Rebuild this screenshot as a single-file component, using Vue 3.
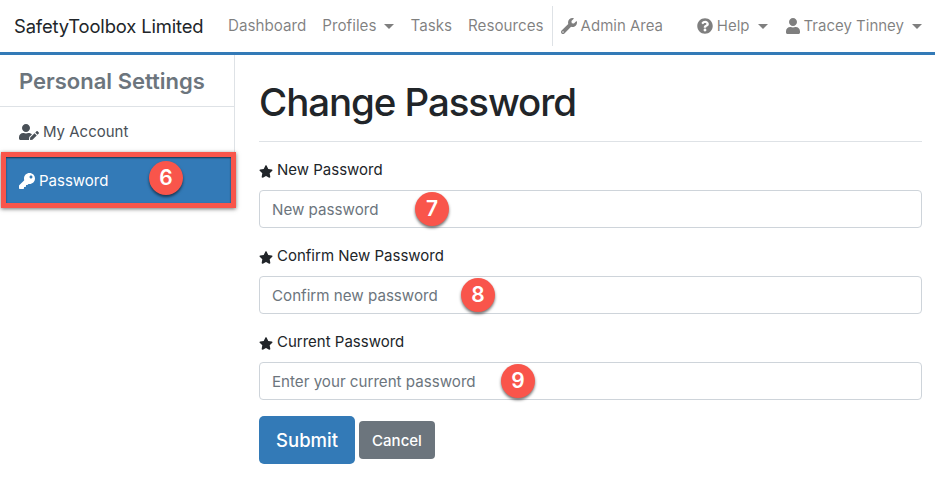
<template>
  <div class="page">
    <nav class="navbar">
      <a class="brand">SafetyToolbox Limited</a>
      <ul class="nav-list">
        <li class="nav-link">Dashboard</li>
        <li class="nav-link caret">Profiles</li>
        <li class="nav-link">Tasks</li>
        <li class="nav-link">Resources</li>
        <li class="nav-link admin">
          <svg class="icon" viewBox="0 0 512 512"><path :d="icons.wrench" /></svg>
          Admin Area
        </li>
      </ul>
      <ul class="nav-list right">
        <li class="nav-link caret">
          <svg class="icon" viewBox="0 0 512 512"><path :d="icons.help" /></svg>
          Help
        </li>
        <li class="nav-link caret">
          <svg class="icon user" viewBox="0 0 448 512"><path :d="icons.user" /></svg>
          Tracey Tinney
        </li>
      </ul>
    </nav>

    <div class="content">
      <aside class="sidebar">
        <h5 class="side-title">Personal Settings</h5>
        <a class="side-item">
          <svg class="side-icon edit" viewBox="0 0 640 512"><path :d="icons.userEdit" /></svg>
          My Account
        </a>
        <a class="side-item active">
          <svg class="side-icon" viewBox="0 0 512 512"><path :d="icons.key" /></svg>
          Password
          <span class="badge badge-side">6</span>
        </a>
      </aside>

      <main class="main">
        <h1 class="title">Change Password</h1>
        <form class="form" @submit.prevent>
          <div v-for="field in fields" :key="field.badge" class="field">
            <label class="label">
              <svg class="star" viewBox="0 0 576 512"><path :d="icons.star" /></svg>
              {{ field.label }}
            </label>
            <div class="input-wrap">
              <input class="input" type="password" :placeholder="field.placeholder" />
              <span class="badge" :style="{ left: field.left + 'px' }">{{ field.badge }}</span>
            </div>
          </div>
          <div class="actions">
            <button class="btn btn-submit" type="submit">Submit</button>
            <button class="btn btn-cancel" type="button">Cancel</button>
          </div>
        </form>
      </main>
    </div>
  </div>
</template>

<script setup>
const icons = {
  wrench: 'M507.73 109.1c-2.24-9.03-13.54-12.09-20.12-5.51l-74.36 74.36-67.88-11.31-11.31-67.88 74.36-74.36c6.62-6.62 3.43-17.9-5.66-20.16-47.38-11.74-99.55.91-136.58 37.93-39.64 39.64-50.55 97.1-34.05 147.2L18.74 402.76c-24.99 24.99-24.99 65.51 0 90.5 24.99 24.99 65.51 24.99 90.5 0l213.21-213.21c50.12 16.71 107.47 5.68 147.37-34.22 37.07-37.07 49.7-89.32 37.91-136.73zM64 472c-13.25 0-24-10.75-24-24 0-13.26 10.75-24 24-24s24 10.74 24 24c0 13.25-10.75 24-24 24z',
  help: 'M504 256c0 136.997-111.043 248-248 248S8 392.997 8 256C8 119.083 119.043 8 256 8s248 111.083 248 248zM262.655 90c-54.497 0-89.255 22.957-116.549 63.758-3.536 5.286-2.353 12.415 2.715 16.258l34.699 26.31c5.205 3.947 12.621 3.008 16.665-2.122 17.864-22.658 30.113-35.797 57.303-35.797 20.429 0 45.698 13.148 45.698 32.958 0 14.976-12.363 22.667-32.534 33.976C247.128 238.528 216 254.941 216 296v4c0 6.627 5.373 12 12 12h56c6.627 0 12-5.373 12-12v-1.333c0-28.462 83.186-29.647 83.186-106.667 0-58.002-60.165-102-116.531-102zM256 338c-25.365 0-46 20.635-46 46 0 25.364 20.635 46 46 46s46-20.636 46-46c0-25.365-20.635-46-46-46z',
  user: 'M224 256c70.7 0 128-57.3 128-128S294.7 0 224 0 96 57.3 96 128s57.3 128 128 128zm89.6 32h-16.7c-22.2 10.2-46.9 16-72.9 16s-50.6-5.8-72.9-16h-16.7C60.2 288 0 348.2 0 422.4V464c0 26.5 21.5 48 48 48h352c26.5 0 48-21.5 48-48v-41.6c0-74.2-60.2-134.4-134.4-134.4z',
  userEdit: 'M224 256c70.7 0 128-57.3 128-128S294.7 0 224 0 96 57.3 96 128s57.3 128 128 128zm89.6 32h-16.7c-22.2 10.2-46.9 16-72.9 16s-50.6-5.8-72.9-16h-16.7C60.2 288 0 348.2 0 422.4V464c0 26.5 21.5 48 48 48h274.9c-2.4-6.8-3.4-14-2.6-21.3l6.8-60.9 1.2-11.1 7.9-7.9 77.3-77.3c-24.5-27.7-60-45.5-99.9-45.5zm45.3 145.3l-6.8 61c-1.1 10.2 7.5 18.8 17.6 17.6l60.9-6.8 137.9-137.9-71.7-71.7-137.9 137.8zM633 268.9L595.1 231c-9.3-9.3-24.5-9.3-33.8 0l-37.8 37.8-4.1 4.1 71.8 71.7 41.8-41.8c9.3-9.4 9.3-24.5 0-33.9z',
  key: 'M512 176.001C512 273.203 433.202 352 336 352c-11.22 0-22.19-1.062-32.827-3.069l-24.012 27.014A23.999 23.999 0 0 1 261.223 384H224v40c0 13.255-10.745 24-24 24h-40v40c0 13.255-10.745 24-24 24H24c-13.255 0-24-10.745-24-24v-78.059c0-6.365 2.529-12.47 7.029-16.971l161.802-161.802C163.108 213.814 160 195.271 160 176 160 78.798 238.797.001 335.999 0 433.488-.001 512 78.511 512 176.001zM336 128c0 26.51 21.49 48 48 48s48-21.49 48-48-21.49-48-48-48-48 21.49-48 48z',
  star: 'M259.3 17.8L194 150.2 47.9 171.5c-26.2 3.8-36.7 36.1-17.7 54.6l105.7 103-25 145.5c-4.5 26.3 23.2 46 46.4 33.7L288 439.6l130.7 68.7c23.2 12.2 50.9-7.4 46.4-33.7l-25-145.5 105.7-103c19-18.5 8.5-50.8-17.7-54.6L382 150.2 316.7 17.8c-11.7-23.6-45.6-23.9-57.4 0z'
}

const fields = [
  { label: 'New Password', placeholder: 'New password', badge: 7, left: 156 },
  { label: 'Confirm New Password', placeholder: 'Confirm new password', badge: 8, left: 202 },
  { label: 'Current Password', placeholder: 'Enter your current password', badge: 9, left: 242 }
]
</script>

<style>
html,
body {
  margin: 0;
  background: #fff;
}
</style>

<style scoped>
.page {
  width: 935px;
  height: 486px;
  overflow: hidden;
  font-family: Inter, "Liberation Sans", sans-serif;
  font-size: 16px;
  line-height: 24px;
  color: #212529;
}

.navbar {
  display: flex;
  align-items: center;
  height: 52px;
  padding: 0 5px 0 14px;
  border-bottom: 3px solid #337ab7;
}

.brand {
  width: 206px;
  font-size: 18.4px;
  letter-spacing: -0.15px;
  white-space: nowrap;
}

.nav-list {
  display: flex;
  align-items: center;
  margin: 0;
  padding: 0;
  list-style: none;
}

.nav-list.right {
  margin-left: auto;
}

.nav-link {
  display: flex;
  align-items: center;
  padding: 0 8px;
  font-size: 15.2px;
  color: rgba(0, 0, 0, 0.5);
  white-space: nowrap;
}

.caret::after {
  content: "";
  margin-left: 8px;
  border-top: 5px solid;
  border-left: 5px solid transparent;
  border-right: 5px solid transparent;
}

.admin {
  height: 40px;
  border-left: 1px solid #dee2e6;
  font-size: 15px;
}

.right .nav-link {
  font-size: 15px;
}

.right .nav-link:first-child {
  margin-right: 2px;
}

.icon {
  width: 16px;
  height: 16px;
  margin-right: 4px;
  fill: rgba(0, 0, 0, 0.5);
}

.icon.user {
  width: 14px;
}

.content {
  display: flex;
}

.sidebar {
  box-sizing: border-box;
  width: 235px;
  height: 98px;
  border-right: 1px solid #dee2e6;
}

.side-title {
  margin: 0;
  height: 52px;
  box-sizing: border-box;
  border-bottom: 1px solid #dee2e6;
  padding-left: 19px;
  font-size: 22px;
  font-weight: 600;
  line-height: 52px;
  color: #6c757d;
}

.side-item {
  position: relative;
  display: flex;
  align-items: center;
  gap: 4px;
  box-sizing: border-box;
  height: 48px;
  padding: 1px 0 0 19px;
  font-size: 15px;
  color: #495057;
}

.side-item.active {
  width: 235px;
  height: 56px;
  margin: -3px 0 0 1px;
  padding-left: 13px;
  border: 5px solid #f9554b;
  background: #337ab7;
  color: #fff;
  box-shadow: 0 1px 4px rgba(0, 0, 0, 0.55), inset 0 1px 2px rgba(0, 0, 0, 0.6);
}

.side-icon {
  width: 16px;
  height: 16px;
  fill: currentColor;
}

.side-icon.edit {
  width: 20px;
}

.main {
  flex: 1;
  box-sizing: border-box;
  padding: 0 13px 0 24px;
}

.title {
  margin: 0 0 16px;
  height: 87px;
  box-sizing: border-box;
  border-bottom: 1px solid #dee2e6;
  font-size: 38.5px;
  font-weight: 500;
  letter-spacing: -1.1px;
  line-height: 94px;
}

.field {
  margin-bottom: 16px;
}

.label {
  display: flex;
  align-items: center;
  gap: 4px;
  margin-bottom: 8px;
  font-size: 15px;
}

.star {
  width: 14px;
  height: 13px;
  margin-top: 3px;
  fill: #212529;
}

.input-wrap {
  position: relative;
}

.input {
  display: block;
  width: 100%;
  box-sizing: border-box;
  height: 38px;
  padding: 6px 12px;
  border: 1px solid #ced4da;
  border-radius: 4px;
  font: inherit;
  font-size: 15.15px;
}

.input::placeholder {
  color: #6c757d;
  opacity: 1;
}

.badge {
  position: absolute;
  top: 2px;
  width: 34px;
  height: 34px;
  border-radius: 50%;
  background: #f9554b;
  color: #fff;
  font-size: 21px;
  font-weight: 600;
  line-height: 34px;
  text-align: center;
  box-shadow: 0 2px 3px rgba(0, 0, 0, 0.55);
}

.badge-side {
  top: 4px;
  left: 143px;
}

.actions {
  display: flex;
  align-items: center;
  gap: 4px;
}

.btn {
  border: 0;
  color: #fff;
  font-family: inherit;
}

.btn-submit {
  width: 96px;
  height: 48px;
  border-radius: 5px;
  background: #337ab7;
  font-size: 18.5px;
  font-weight: 500;
}

.btn-cancel {
  width: 76px;
  height: 38px;
  border-radius: 4px;
  background: #6c757d;
  font-size: 15px;
  font-weight: 500;
}
</style>
